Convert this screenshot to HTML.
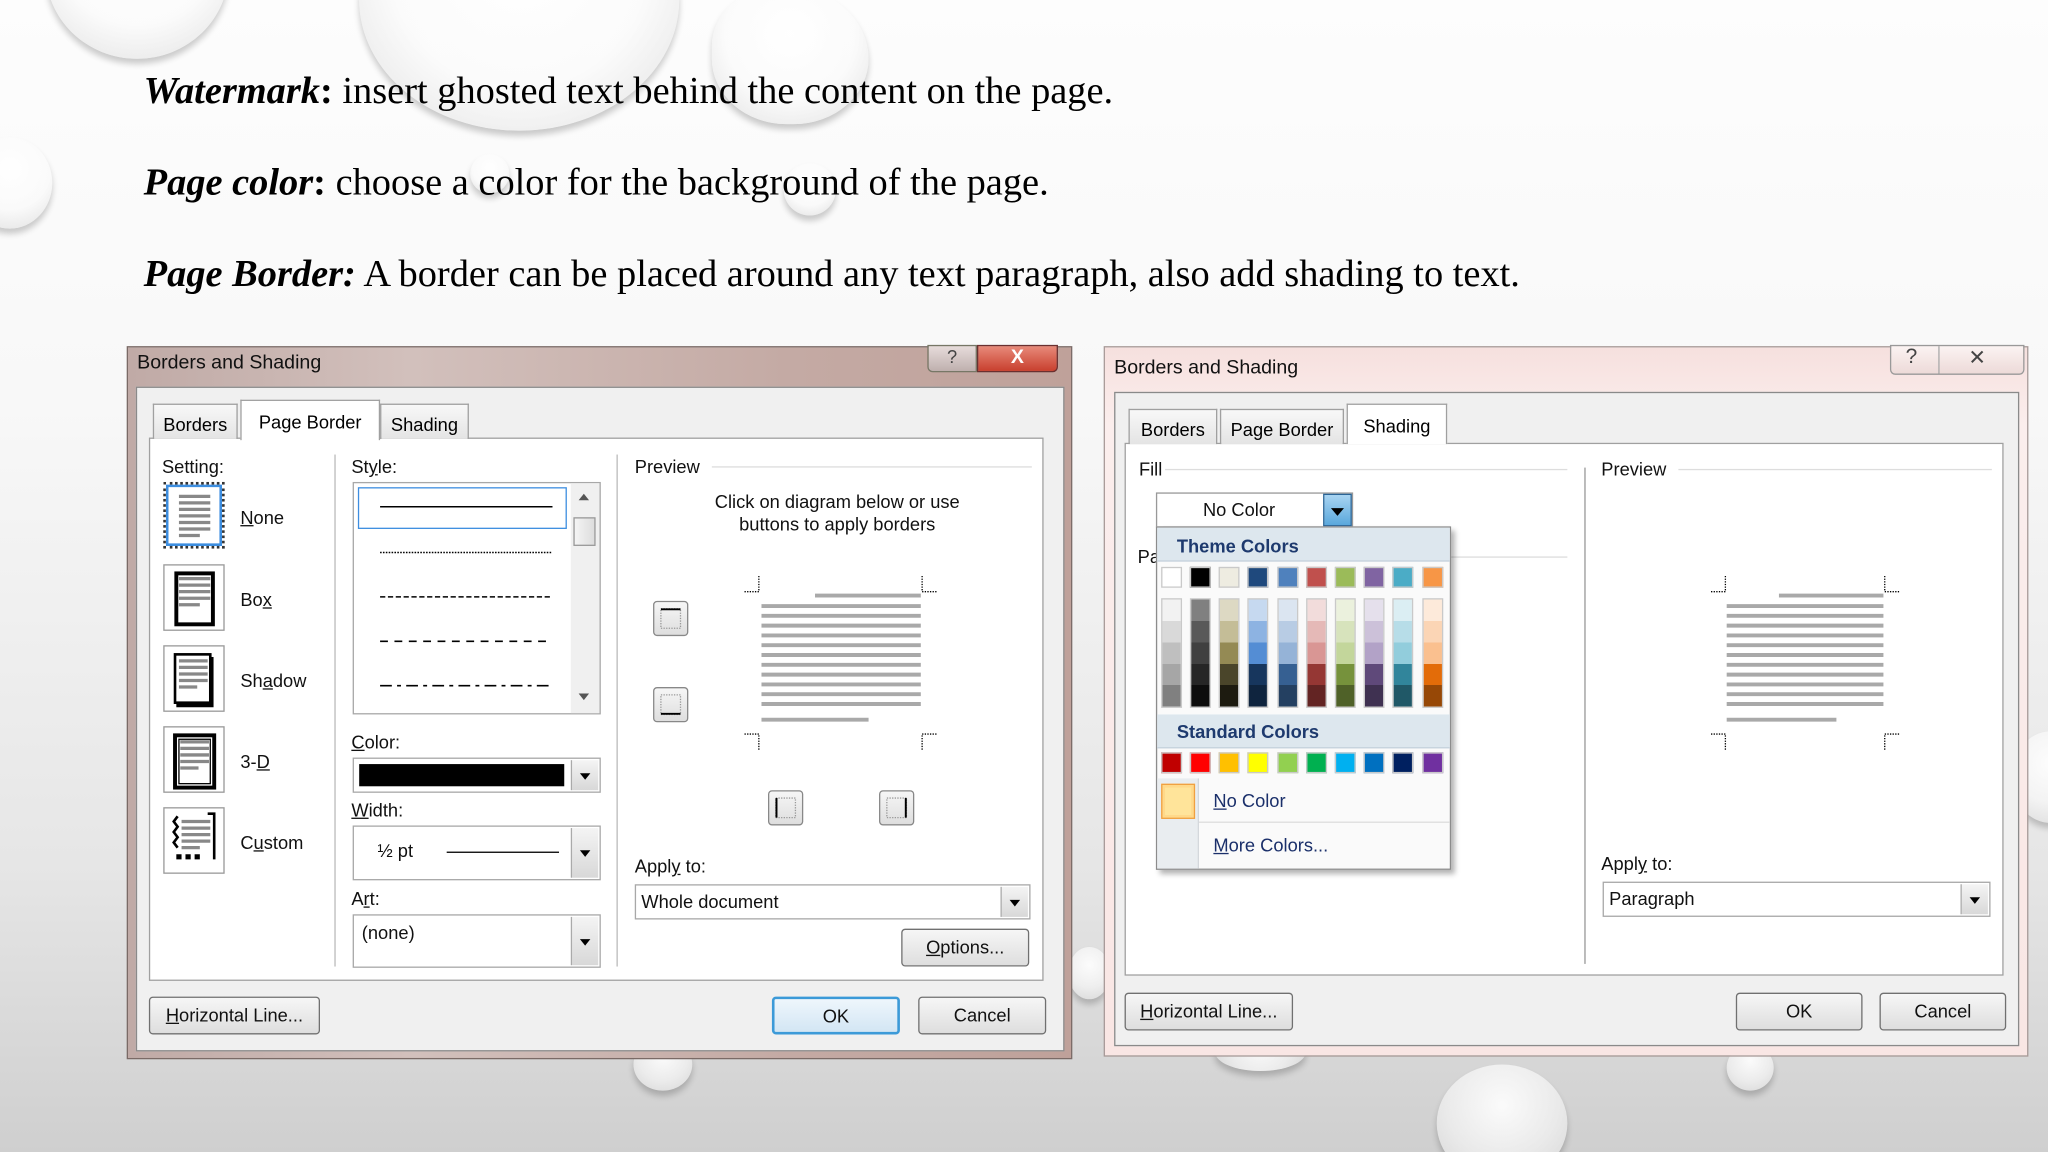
<!DOCTYPE html>
<html><head><meta charset="utf-8"><style>
*{box-sizing:border-box;margin:0;padding:0}
html,body{width:2048px;height:1152px;overflow:hidden}
body{background:#fff}
#s{position:absolute;left:0;top:0;width:1568px;height:882px;transform:scale(1.306122);transform-origin:0 0;
background:linear-gradient(#fdfdfd 0%,#f8f8f8 35%,#e6e6e6 75%,#cfcfcf 100%);overflow:hidden;font-family:"Liberation Sans",sans-serif}
.a{position:absolute}
.drop{position:absolute;border-radius:50%;background:radial-gradient(circle at 50% 35%,rgba(255,255,255,.9) 0%,rgba(250,250,250,.6) 55%,rgba(225,225,225,.7) 85%,rgba(190,190,190,.8) 100%);box-shadow:0 4px 5px rgba(0,0,0,.2)}
.t{font-family:"Liberation Serif",serif;font-size:29.4px;color:#000;position:absolute;left:110px;white-space:nowrap}
.d{font-size:14px;color:#111;white-space:nowrap}
.btn{position:absolute;border:1px solid #707070;border-radius:3px;background:linear-gradient(#f6f6f6,#dedede);font-size:14px;text-align:center;color:#111}
.box{position:absolute;background:#fff;border:1px solid #a8a8a8}
.dd{position:absolute;width:21px;top:1px;bottom:1px;right:1px;background:linear-gradient(#f4f4f4,#d8d8d8);border-left:1px solid #aaa}
.dd:after{content:"";position:absolute;left:6px;top:50%;margin-top:-2px;border-left:4px solid transparent;border-right:4px solid transparent;border-top:5px solid #000}
.tab{position:absolute;border:1px solid #a0a0a0;border-bottom:none;background:linear-gradient(#f8f8f8,#e4e4e4);font-size:14px;text-align:center;padding-top:7px}
.ic{position:absolute;width:47px;height:51px;border:1px solid #999;background:#fff}
.sw{position:absolute;width:16px;height:16px;border:1px solid #c9c9c9}
.col{position:absolute;width:16px;height:84px;border:1px solid #c9c9c9}
u{text-decoration:underline}
</style></head><body><div id="s">
<div class="drop" style="left:35px;top:-90px;width:140px;height:135px"></div>
<div class="drop" style="left:275px;top:-100px;width:245px;height:200px"></div>
<div class="drop" style="left:545px;top:-10px;width:120px;height:105px;border-radius:45% 55% 50% 50%"></div>
<div class="drop" style="left:-25px;top:105px;width:65px;height:70px"></div>
<div class="drop" style="left:360px;top:118px;width:30px;height:30px"></div>
<div class="drop" style="left:600px;top:125px;width:40px;height:40px"></div>
<div class="drop" style="left:1540px;top:560px;width:60px;height:70px"></div>
<div class="drop" style="left:1100px;top:815px;width:100px;height:90px"></div>
<div class="drop" style="left:485px;top:795px;width:45px;height:40px"></div>
<div class="drop" style="left:1322px;top:800px;width:36px;height:35px"></div>
<div class="drop" style="left:930px;top:790px;width:70px;height:30px"></div>
<div class="drop" style="left:818px;top:725px;width:32px;height:40px"></div>

<div class="t" style="top:54px"><b><i>Watermark</i></b><b>:</b> insert ghosted text behind the content on the page.</div>
<div class="t" style="top:124px"><b><i>Page color</i></b><b>:</b> choose a color for the background of the page.</div>
<div class="t" style="top:194px"><b><i>Page Border:</i></b> A border can be placed around any text paragraph, also add shading to text.</div>

<!-- LEFT DIALOG -->
<div class="a" style="left:97px;top:265px;width:724px;height:546px;background:linear-gradient(90deg,#c0aaa6,#d2c0bc 30%,#c4aaa4 70%,#bfa19a);border:1px solid #7a6a66"></div>
<div class="a d" style="left:105px;top:269px;font-size:15px">Borders and Shading</div>
<div class="a" style="left:710px;top:264px;width:38px;height:21px;border:1px solid #776;border-radius:0 0 0 4px;background:linear-gradient(#e7dcdb,#bfb0ae);text-align:center;font-size:14px;color:#444">?</div>
<div class="a" style="left:748px;top:264px;width:62px;height:21px;border:1px solid #6a3030;border-radius:0 0 4px 0;background:linear-gradient(#e88a7a,#c8402e);text-align:center;color:#fff;font-weight:bold;font-size:15px">X</div>
<div class="a" style="left:104px;top:296px;width:711px;height:509px;background:#f0f0f0;border:1px solid #8a8a8a"></div>
<div class="a" style="left:114px;top:335px;width:685px;height:416px;background:#fff;border:1px solid #a0a0a0"></div>
<div class="tab" style="left:117px;top:309px;width:65px;height:27px">Borders</div>
<div class="tab" style="left:184px;top:306px;width:107px;height:31px;background:#fff;padding-top:8px">Page Border</div>
<div class="tab" style="left:291px;top:309px;width:68px;height:27px">Shading</div>

<div class="a d" style="left:124px;top:349px">Setting:</div>
<div class="ic" style="left:125px;top:369px;border:2px dotted #333;box-shadow:inset 0 0 0 2px #3d8ee0"></div>
<div class="ic" style="left:125px;top:432px"></div>
<div class="ic" style="left:125px;top:494px"></div>
<div class="ic" style="left:125px;top:556px"></div>
<div class="ic" style="left:125px;top:618px"></div>
<svg class="a" style="left:125px;top:369px" width="48" height="300">
<g stroke="#888" stroke-width="2.5">
<path d="M12 11h24M12 16h24M12 21h24M12 26h24M12 31h24M12 36h24M12 41h16"/>
<path d="M12 74h24M12 79h24M12 84h24M12 89h24M12 94h16"/>
<path d="M12 137h22M12 142h22M12 147h22M12 152h22M12 157h14"/>
<path d="M13 199h22M13 204h22M13 209h22M13 214h22M13 219h14"/>
<path d="M14 260h22M14 265h22M14 270h22M14 275h22M14 280h14"/></g>
<rect x="10" y="70" width="28" height="39" fill="none" stroke="#000" stroke-width="3"/>
<rect x="9" y="132" width="27" height="37" fill="none" stroke="#000" stroke-width="2"/><path d="M37 134v37h-27" stroke="#000" stroke-width="3" fill="none"/>
<rect x="9" y="194" width="30" height="40" fill="none" stroke="#000" stroke-width="3"/><rect x="12" y="197" width="24" height="34" fill="none" stroke="#000" stroke-width="1"/>
<path d="M34 254h5v35M11 256l-3 4 3 4-3 4 3 4-3 4 3 4" stroke="#000" stroke-width="2" fill="none"/><path d="M10 287h4M17 287h4M24 287h4" stroke="#000" stroke-width="4"/>
</svg>
<div class="a d" style="left:184px;top:388px"><u>N</u>one</div>
<div class="a d" style="left:184px;top:451px">Bo<u>x</u></div>
<div class="a d" style="left:184px;top:513px">Sh<u>a</u>dow</div>
<div class="a d" style="left:184px;top:575px">3-<u>D</u></div>
<div class="a d" style="left:184px;top:637px">C<u>u</u>stom</div>
<div class="a" style="left:256px;top:348px;width:1px;height:392px;background:#bbb"></div>

<div class="a d" style="left:269px;top:349px">St<u>y</u>le:</div>
<div class="box" style="left:270px;top:369px;width:190px;height:178px"></div>
<div class="a" style="left:274px;top:373px;width:160px;height:32px;border:1px solid #3d8ee0"></div>
<div class="a" style="left:437px;top:370px;width:22px;height:176px;background:#f0f0f0"></div>
<div class="a" style="left:439px;top:396px;width:17px;height:22px;border:1px solid #999;background:linear-gradient(90deg,#f4f4f4,#ddd)"></div>
<div class="a" style="left:443px;top:378px;border-left:4px solid transparent;border-right:4px solid transparent;border-bottom:5px solid #555"></div>
<div class="a" style="left:443px;top:531px;border-left:4px solid transparent;border-right:4px solid transparent;border-top:5px solid #555"></div>
<svg class="a" style="left:285px;top:380px" width="145" height="160"><g stroke="#000" stroke-width="1.2">
<path d="M6 8h132"/><path d="M6 43h132" stroke-dasharray="1.2 1"/><path d="M6 77h132" stroke-dasharray="4 2"/><path d="M6 111h132" stroke-dasharray="6 5"/><path d="M6 145h132" stroke-dasharray="9 4 3 4"/></g></svg>

<div class="a d" style="left:269px;top:560px"><u>C</u>olor:</div>
<div class="box" style="left:270px;top:580px;width:190px;height:27px"><div class="a" style="left:4px;top:4px;width:157px;height:17px;background:#000"></div><div class="dd"></div></div>
<div class="a d" style="left:269px;top:612px"><u>W</u>idth:</div>
<div class="box" style="left:270px;top:632px;width:190px;height:42px"><div class="a d" style="left:18px;top:10px">½ pt</div><div class="a" style="left:71px;top:19px;width:86px;height:1px;background:#000"></div><div class="dd"></div></div>
<div class="a d" style="left:269px;top:680px">A<u>r</u>t:</div>
<div class="box" style="left:270px;top:700px;width:190px;height:41px"><div class="a d" style="left:6px;top:5px">(none)</div><div class="dd"></div></div>
<div class="a" style="left:472px;top:348px;width:1px;height:392px;background:#bbb"></div>

<div class="a d" style="left:486px;top:349px">Preview</div>
<div class="a" style="left:545px;top:357px;width:245px;height:1px;background:#ddd"></div>
<div class="a d" style="left:500px;top:376px;width:282px;text-align:center;line-height:17px">Click on diagram below or use<br>buttons to apply borders</div>
<svg class="a" style="left:560px;top:435px" width="170" height="140"><g stroke="#000" stroke-width="1" stroke-dasharray="1 1" fill="none">
<path d="M10 18h11V6M146 6v12h12M10 127h11v12M146 139v-12h12"/></g>
<g stroke="#a9a9a9" stroke-width="3"><path d="M64 21h81"/>
<path d="M23 29h122M23 36.5h122M23 44h122M23 51.5h122M23 59h122M23 66.5h122M23 74h122M23 81.5h122M23 89h122M23 96.5h122M23 104h122"/><path d="M23 116h82"/></g></svg>
<div class="btn" style="left:500px;top:460px;width:27px;height:27px;border-color:#888"></div>
<div class="btn" style="left:500px;top:526px;width:27px;height:27px;border-color:#888"></div>
<div class="btn" style="left:588px;top:605px;width:27px;height:27px;border-color:#888"></div>
<div class="btn" style="left:673px;top:605px;width:27px;height:27px;border-color:#888"></div>
<svg class="a" style="left:500px;top:460px" width="210" height="175"><g fill="none" stroke="#999" stroke-dasharray="1 1"><rect x="6" y="6" width="15" height="15"/><rect x="6" y="72" width="15" height="15"/><rect x="94" y="151" width="15" height="15"/><rect x="179" y="151" width="15" height="15"/></g>
<g stroke="#000" stroke-width="1.5"><path d="M6 6.5h15M6 86.5h15M94.5 151v15M193.5 151v15"/></g></svg>
<div class="a d" style="left:486px;top:655px">Appl<u>y</u> to:</div>
<div class="box" style="left:486px;top:677px;width:303px;height:27px"><div class="a d" style="left:4px;top:4px">Whole document</div><div class="dd"></div></div>
<div class="btn" style="left:690px;top:711px;width:98px;height:29px;line-height:27px"><u>O</u>ptions...</div>
<div class="btn" style="left:114px;top:763px;width:131px;height:29px;line-height:27px"><u>H</u>orizontal Line...</div>
<div class="btn" style="left:591px;top:763px;width:98px;height:29px;line-height:27px;border:2px solid #3c9ad8;background:linear-gradient(#eef6fc,#d3e6f4)">OK</div>
<div class="btn" style="left:703px;top:763px;width:98px;height:29px;line-height:27px">Cancel</div>

<!-- RIGHT DIALOG -->
<div class="a" style="left:845px;top:265px;width:708px;height:544px;background:linear-gradient(#f6e0de,#fbeeed 60px,#f9e6e4);border:1px solid #a89a98"></div>
<div class="a d" style="left:853px;top:273px;font-size:15px">Borders and Shading</div>
<div class="a" style="left:1447px;top:264px;width:103px;height:23px;border:1px solid #999;border-radius:0 0 4px 4px;background:linear-gradient(#fbf3f2,#eddad8)"></div>
<div class="a" style="left:1484px;top:265px;width:1px;height:21px;background:#aaa"></div>
<div class="a" style="left:1459px;top:265px;font-size:16px;color:#444">?</div>
<div class="a" style="left:1507px;top:264px;font-size:16px;color:#444">✕</div>
<div class="a" style="left:853px;top:300px;width:693px;height:501px;background:#f0f0f0;border:1px solid #8a8a8a"></div>
<div class="a" style="left:861px;top:339px;width:673px;height:408px;background:#fff;border:1px solid #a0a0a0"></div>
<div class="tab" style="left:864px;top:313px;width:68px;height:27px">Borders</div>
<div class="tab" style="left:934px;top:313px;width:95px;height:27px">Page Border</div>
<div class="tab" style="left:1031px;top:309px;width:77px;height:31px;background:#fff;padding-top:8px">Shading</div>
<div class="a d" style="left:872px;top:351px">Fill</div>
<div class="a" style="left:892px;top:359px;width:308px;height:1px;background:#ddd"></div>
<div class="a d" style="left:871px;top:418px">Pa</div>
<div class="a" style="left:1110px;top:426px;width:90px;height:1px;background:#ddd"></div>
<div class="a" style="left:1213px;top:358px;width:1px;height:380px;background:#999"></div>
<div class="a d" style="left:1226px;top:351px">Preview</div>
<div class="a" style="left:1285px;top:359px;width:240px;height:1px;background:#ddd"></div>
<svg class="a" style="left:1300px;top:435px" width="170" height="140"><g stroke="#000" stroke-width="1" stroke-dasharray="1 1" fill="none">
<path d="M10 18h11V6M143 6v12h12M10 127h11v12M143 139v-12h12"/></g>
<g stroke="#a9a9a9" stroke-width="3"><path d="M62 21h80"/>
<path d="M22 29h120M22 36.5h120M22 44h120M22 51.5h120M22 59h120M22 66.5h120M22 74h120M22 81.5h120M22 89h120M22 96.5h120M22 104h120"/><path d="M22 116h84"/></g></svg>
<div class="a d" style="left:1226px;top:653px">Appl<u>y</u> to:</div>
<div class="box" style="left:1227px;top:675px;width:297px;height:27px"><div class="a d" style="left:4px;top:4px">Paragraph</div><div class="dd"></div></div>
<div class="btn" style="left:861px;top:760px;width:129px;height:29px;line-height:27px"><u>H</u>orizontal Line...</div>
<div class="btn" style="left:1329px;top:760px;width:97px;height:29px;line-height:27px">OK</div>
<div class="btn" style="left:1439px;top:760px;width:97px;height:29px;line-height:27px">Cancel</div>

<div class="box" style="left:885px;top:377px;width:151px;height:27px;border-color:#999"><div class="a d" style="left:35px;top:4px">No Color</div>
<div class="a" style="right:0;top:0;width:22px;height:25px;background:linear-gradient(#a8d4f2,#5aa8dc);border:1px solid #2a6496"></div><div class="a" style="right:6px;top:11px;border-left:5px solid transparent;border-right:5px solid transparent;border-top:6px solid #000"></div></div>
<div class="a" style="left:885px;top:403px;width:226px;height:263px;background:#fafafa;border:1px solid #8c8c8c;box-shadow:3px 3px 4px rgba(0,0,0,.3)"></div>
<div class="a" style="left:886px;top:404px;width:224px;height:26px;background:#dde7ee;border-bottom:1px solid #c5d2dc"></div>
<div class="a" style="left:901px;top:410px;font-size:14px;font-weight:bold;color:#1e3a6e">Theme Colors</div>
<div class="a" style="left:886px;top:547px;width:224px;height:26px;background:#dde7ee;border-bottom:1px solid #c5d2dc"></div>
<div class="a" style="left:901px;top:552px;font-size:14px;font-weight:bold;color:#1e3a6e">Standard Colors</div>
<div class="a" style="left:886px;top:596px;width:32px;height:69px;background:#e9edf0;border-right:1px solid #d4d8dc"></div>
<div class="a" style="left:918px;top:629px;width:192px;height:1px;background:#ddd"></div>
<div class="a" style="left:889px;top:600px;width:26px;height:27px;border:1px solid #f0a040;background:#ffe49a;box-shadow:inset 0 0 0 2px #ffd98a"></div>
<div class="a d" style="left:929px;top:605px;color:#1a2f6a"><u>N</u>o Color</div>
<div class="a d" style="left:929px;top:639px;color:#1a2f6a"><u>M</u>ore Colors...</div>

<div class="sw" style="left:889px;top:434px;background:#fff"></div>
<div class="sw" style="left:911px;top:434px;background:#000"></div>
<div class="sw" style="left:933px;top:434px;background:#eeece1"></div>
<div class="sw" style="left:955px;top:434px;background:#1f497d"></div>
<div class="sw" style="left:978px;top:434px;background:#4f81bd"></div>
<div class="sw" style="left:1000px;top:434px;background:#c0504d"></div>
<div class="sw" style="left:1022px;top:434px;background:#9bbb59"></div>
<div class="sw" style="left:1044px;top:434px;background:#8064a2"></div>
<div class="sw" style="left:1066px;top:434px;background:#4bacc6"></div>
<div class="sw" style="left:1089px;top:434px;background:#f79646"></div>

<div class="col" style="left:889px;top:458px;background:linear-gradient(#f2f2f2 20%,#d9d9d9 20% 40%,#bfbfbf 40% 60%,#a6a6a6 60% 80%,#808080 80%)"></div>
<div class="col" style="left:911px;top:458px;background:linear-gradient(#808080 20%,#595959 20% 40%,#404040 40% 60%,#262626 60% 80%,#0d0d0d 80%)"></div>
<div class="col" style="left:933px;top:458px;background:linear-gradient(#ddd9c3 20%,#c4bd97 20% 40%,#948a54 40% 60%,#4a452a 60% 80%,#1d1b10 80%)"></div>
<div class="col" style="left:955px;top:458px;background:linear-gradient(#c6d9f0 20%,#8db3e2 20% 40%,#548dd4 40% 60%,#17365d 60% 80%,#0f243e 80%)"></div>
<div class="col" style="left:978px;top:458px;background:linear-gradient(#dbe5f1 20%,#b8cce4 20% 40%,#95b3d7 40% 60%,#366092 60% 80%,#244061 80%)"></div>
<div class="col" style="left:1000px;top:458px;background:linear-gradient(#f2dcdb 20%,#e5b9b7 20% 40%,#d99694 40% 60%,#953734 60% 80%,#632423 80%)"></div>
<div class="col" style="left:1022px;top:458px;background:linear-gradient(#ebf1dd 20%,#d7e3bc 20% 40%,#c3d69b 40% 60%,#76923c 60% 80%,#4f6128 80%)"></div>
<div class="col" style="left:1044px;top:458px;background:linear-gradient(#e5e0ec 20%,#ccc1d9 20% 40%,#b2a2c7 40% 60%,#5f497a 60% 80%,#3f3151 80%)"></div>
<div class="col" style="left:1066px;top:458px;background:linear-gradient(#dbeef3 20%,#b7dde8 20% 40%,#92cddc 40% 60%,#31859b 60% 80%,#205867 80%)"></div>
<div class="col" style="left:1089px;top:458px;background:linear-gradient(#fdeada 20%,#fbd5b5 20% 40%,#fac08f 40% 60%,#e36c09 60% 80%,#974806 80%)"></div>

<div class="sw" style="left:889px;top:576px;background:#c00000"></div>
<div class="sw" style="left:911px;top:576px;background:#ff0000"></div>
<div class="sw" style="left:933px;top:576px;background:#ffc000"></div>
<div class="sw" style="left:955px;top:576px;background:#ffff00"></div>
<div class="sw" style="left:978px;top:576px;background:#92d050"></div>
<div class="sw" style="left:1000px;top:576px;background:#00b050"></div>
<div class="sw" style="left:1022px;top:576px;background:#00b0f0"></div>
<div class="sw" style="left:1044px;top:576px;background:#0070c0"></div>
<div class="sw" style="left:1066px;top:576px;background:#002060"></div>
<div class="sw" style="left:1089px;top:576px;background:#7030a0"></div>
</div></body></html>
